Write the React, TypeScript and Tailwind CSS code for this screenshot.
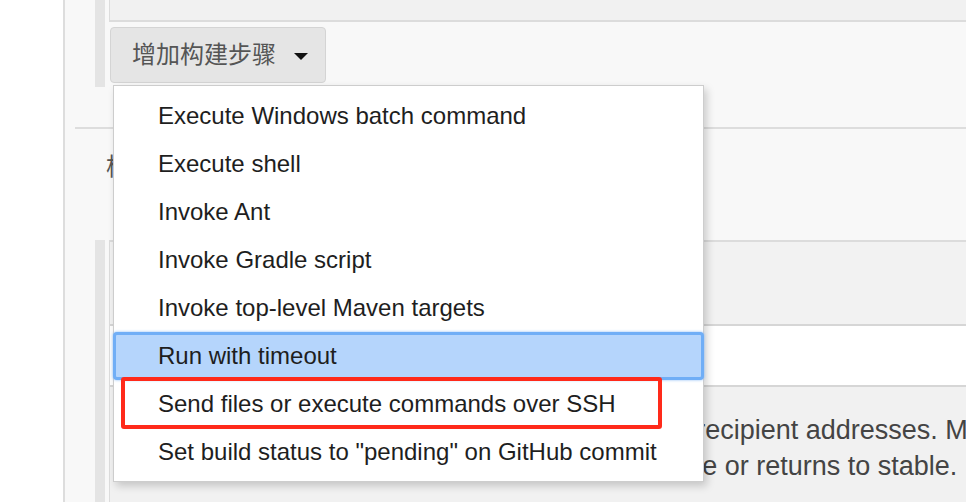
import React from 'react';

const items = [
  'Execute Windows batch command',
  'Execute shell',
  'Invoke Ant',
  'Invoke Gradle script',
  'Invoke top-level Maven targets',
  'Run with timeout',
  'Send files or execute commands over SSH',
  'Set build status to "pending" on GitHub commit',
];

const BuildStepMenu: React.FC = () => {
  return (
    <div className="absolute left-[3px] top-[58px] z-10 w-[591px] border border-[#cdcdcd] bg-white pt-[6px] pb-[5px] shadow-[3px_4px_8px_rgba(0,0,0,0.18)]">
      {items.map((label, i) =>
        i === 5 ? (
          <div
            key={label}
            className="-mx-px flex h-[48px] items-center rounded-[4px] border-[3px] border-[#70aef6] bg-[#b5d5fc] pl-[42px] text-[24px] text-[#1e1e1e] shadow-[0_0_3px_#8bbcf7]"
          >
            {label}
          </div>
        ) : (
          <div key={label} className="flex h-[48px] items-center pl-[44px] text-[24px] text-[#1e1e1e]">
            {label}
          </div>
        )
      )}
      {/* red highlight box from the annotated screenshot */}
      <div className="absolute left-[7px] top-[291px] h-[52px] w-[541px] rounded-[3px] border-4 border-[#ff2a1a]" />
    </div>
  );
};

const App: React.FC = () => {
  return (
    <div className="flex h-[502px] w-[966px] overflow-hidden bg-[#f8f8f8] font-['Liberation_Sans','Noto_Sans_CJK_SC',sans-serif]">
      <div className="w-[65px] shrink-0 border-r-2 border-[#dddddd] bg-white" />

      <div className="flex flex-1 flex-col pl-[10px]">
        {/* build steps section */}
        <div className="flex h-[129px] shrink-0 border-b-2 border-[#dddddd] pl-[20px]">
          <div className="h-[87px] w-[10px] shrink-0 bg-[#e4e4e4]" />
          <div className="ml-[4px] flex-1">
            <div className="h-[22px] border-b-2 border-l border-[#dcdcdc] bg-[#f1f1f1]" />
            <div className="relative ml-px mt-[5px]">
              <button className="flex h-[56px] w-[216px] items-center rounded-[4px] border border-[#d4d4d4] bg-[#e5e5e5] pl-[21px] text-[24px] text-[#555555]">
                <span>增加构建步骤</span>
                <span className="ml-[18px] mt-[2px] h-0 w-0 border-x-[7px] border-t-[7px] border-x-transparent border-t-[#111111]" />
              </button>
              <BuildStepMenu />
            </div>
          </div>
        </div>

        {/* post-build section */}
        <div className="flex flex-1 flex-col">
          <div className="h-[111px] shrink-0 pl-[31px] pt-[20px] text-[24px] text-[#555555]">构建后操作</div>
          <div className="flex flex-1 pl-[20px]">
            <div className="w-[10px] shrink-0 bg-[#e4e4e4]" />
            <div className="ml-[4px] flex flex-1 flex-col border-l border-[#dcdcdc]">
              <div className="h-[84px] border-t-2 border-[#dcdcdc] bg-[#f2f2f2]" />
              <div className="h-[63px] border-y-2 border-[#d6d6d6] bg-white" />
              <div className="flex-1 overflow-hidden bg-[#f1f1f1] pl-[238px] pt-[25px] text-[27px] leading-[36px] text-[#444444]">
                <div className="whitespace-nowrap">
                  Whitespace-separated list of recipient addresses. May reference build parameters like $PARAM.
                </div>
                <div className="whitespace-nowrap">a build fails, becomes unstable or returns to stable.</div>
              </div>
            </div>
          </div>
        </div>
      </div>
    </div>
  );
};

export default App;
